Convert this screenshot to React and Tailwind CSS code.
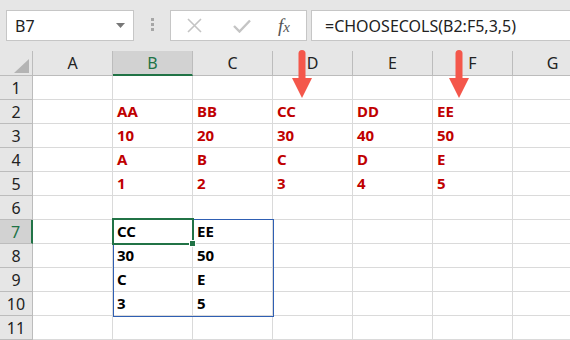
import React from 'react';

const COLS = ['A', 'B', 'C', 'D', 'E', 'F', 'G'];

const DATA = {
  2: { B: 'AA', C: 'BB', D: 'CC', E: 'DD', F: 'EE' },
  3: { B: '10', C: '20', D: '30', E: '40', F: '50' },
  4: { B: 'A', C: 'B', D: 'C', E: 'D', F: 'E' },
  5: { B: '1', C: '2', D: '3', E: '4', F: '5' },
  7: { B: 'CC', C: 'EE' },
  8: { B: '30', C: '50' },
  9: { B: 'C', C: 'E' },
  10: { B: '3', C: '5' },
};

function Arrow({ className }) {
  return (
    <svg className={className} width="22" height="50" viewBox="0 0 22 50">
      <rect x="7.5" y="0" width="7" height="32" rx="3.5" fill="#f4574b" />
      <polygon points="1,28 21,28 11,48" fill="#f4574b" />
    </svg>
  );
}

function FormulaBar() {
  return (
    <div className="flex items-start h-[51px] bg-[#e6e6e6] pt-[10px] pl-[6px]">
      <div className="flex items-center w-[128px] h-[31px] bg-white border border-[#c6c6c6] pl-[8px] pr-[8px]">
        <span className="text-[16px] text-[#222] flex-1">B7</span>
        <svg width="9" height="5" viewBox="0 0 9 5">
          <polygon points="0,0 9,0 4.5,5" fill="#777" />
        </svg>
      </div>
      <div className="flex flex-col gap-[2px] w-[36px] items-center pt-[8px]">
        <div className="w-[3px] h-[3px] bg-[#a6a6a6]" />
        <div className="w-[3px] h-[3px] bg-[#a6a6a6]" />
        <div className="w-[3px] h-[3px] bg-[#a6a6a6]" />
      </div>
      <div className="flex items-center w-[137px] h-[31px] bg-white border border-[#c6c6c6]">
        <svg className="ml-[16px]" width="15" height="15" viewBox="0 0 15 15">
          <path d="M1 1 L14 14 M14 1 L1 14" stroke="#c4c4c4" strokeWidth="1.6" />
        </svg>
        <svg className="ml-[31px]" width="18" height="14" viewBox="0 0 18 14">
          <path d="M1 7 L6.5 12.5 L17 1.5" stroke="#c4c4c4" strokeWidth="2.4" fill="none" />
        </svg>
        <span className="ml-[27px] text-[19px] italic text-[#555] font-['Liberation_Serif',serif] leading-none">
          f<span className="text-[15px]">x</span>
        </span>
      </div>
      <div className="flex items-center flex-1 h-[31px] ml-[4px] bg-white border border-r-0 border-[#c6c6c6] pl-[13px]">
        <span className="text-[16px] text-[#222]">=CHOOSECOLS(B2:F5,3,5)</span>
      </div>
    </div>
  );
}

function HeaderRow() {
  return (
    <div className="flex h-[25px]">
      <div className="w-[33px] shrink-0 bg-[#e6e6e6] border-r border-b border-[#bcbcbc] flex items-end justify-end pr-[3px] pb-[2px]">
        <svg width="15" height="14" viewBox="0 0 15 14">
          <polygon points="15,0 15,14 0,14" fill="#b4b4b4" />
        </svg>
      </div>
      {COLS.map((c) => (
        <div
          key={c}
          className={
            c === 'B'
              ? 'w-[80px] shrink-0 flex items-center justify-center bg-[#d2d2d2] border-r border-[#bcbcbc] border-b-2 border-b-[#217346] text-[#217346] text-[16px]'
              : 'w-[80px] shrink-0 flex items-center justify-center bg-[#e6e6e6] border-r border-b border-[#bcbcbc] text-[#222] text-[16px]'
          }
        >
          {c}
        </div>
      ))}
    </div>
  );
}

function Row({ n }) {
  const row = DATA[n] || {};
  const spill = n >= 7;
  return (
    <div className="flex h-[24px]">
      <div
        className={
          n === 7
            ? 'w-[33px] shrink-0 flex items-center justify-center bg-[#d2d2d2] border-b border-[#bcbcbc] border-r-2 border-r-[#217346] text-[#217346] text-[16px]'
            : 'w-[33px] shrink-0 flex items-center justify-center bg-[#e6e6e6] border-r border-b border-[#bcbcbc] text-[#222] text-[16px]'
        }
      >
        {n}
      </div>
      {COLS.map((c) => (
        <div
          key={c}
          className={
            spill
              ? 'w-[80px] shrink-0 flex items-center pl-[4px] border-r border-b border-[#dadada] bg-white font-bold text-[15px] text-black'
              : 'w-[80px] shrink-0 flex items-center pl-[4px] border-r border-b border-[#dadada] bg-white font-bold text-[15px] text-[#c00000]'
          }
        >
          {row[c] || ''}
        </div>
      ))}
    </div>
  );
}

export default function App() {
  const rows = [1, 2, 3, 4, 5, 6, 7, 8, 9, 10, 11];
  return (
    <div className="relative w-[570px] h-[340px] overflow-hidden bg-white font-['Noto_Sans',sans-serif]">
      <FormulaBar />
      <HeaderRow />
      {rows.map((n) => (
        <Row key={n} n={n} />
      ))}

      {/* spill range outline */}
      <div className="absolute left-[113px] top-[219px] w-[161px] h-[98px] border border-[#2f5fb3] pointer-events-none" />
      {/* active cell */}
      <div className="absolute left-[112px] top-[218px] w-[82px] h-[27px] border-2 border-[#217346] pointer-events-none" />
      <div className="absolute left-[189px] top-[240px] w-[7px] h-[7px] bg-[#217346] border border-white" />

      {/* arrows */}
      <Arrow className="absolute left-[291px] top-[50px]" />
      <Arrow className="absolute left-[448px] top-[50px]" />
    </div>
  );
}
